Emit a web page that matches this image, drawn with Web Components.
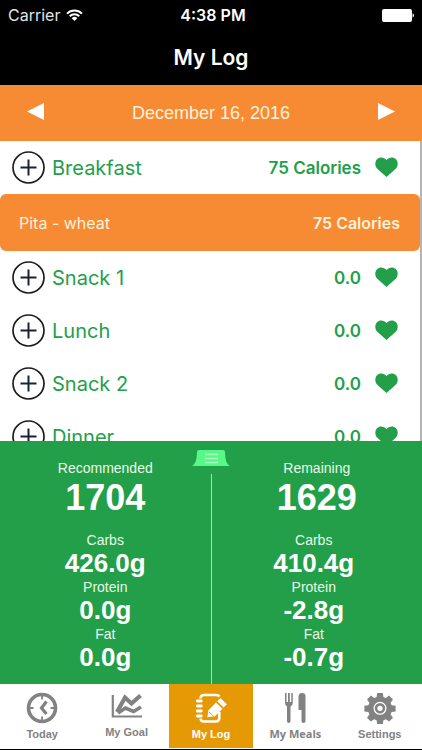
<!DOCTYPE html>
<html lang="en">
<head>
<meta charset="utf-8">
<meta name="viewport" content="width=device-width, initial-scale=1">
<title>My Log</title>
<style>
    body {
        margin: 0;
        font-family: Inter, "Liberation Sans", sans-serif;
        --orange: #f68b33;
        --green: #229f48;
        --active: #e59a05;
        --grey: #828282;
        --helvetica: "Liberation Sans", Arial, sans-serif;
    }
</style>
</head>
<body>

<log-app>
    <status-bar slot="top" carrier="Carrier" time="4:38 PM"></status-bar>
    <title-bar slot="top">My Log</title-bar>
    <date-bar slot="top">December 16, 2016</date-bar>

    <meal-row name="Breakfast">75 Calories</meal-row>
    <food-item name="Pita - wheat">75 Calories</food-item>
    <meal-row name="Snack 1">0.0</meal-row>
    <meal-row name="Lunch">0.0</meal-row>
    <meal-row name="Snack 2">0.0</meal-row>
    <meal-row name="Dinner">0.0</meal-row>

    <day-summary slot="bottom">
        <summary-column name="Recommended" total="1704" carbs="426.0g" protein="0.0g" fat="0.0g"></summary-column>
        <summary-column name="Remaining" total="1629" carbs="410.4g" protein="-2.8g" fat="-0.7g" class="last"></summary-column>
    </day-summary>
    <tab-bar slot="bottom">
        <tab-item icon="clock">Today</tab-item>
        <tab-item icon="chart">My Goal</tab-item>
        <tab-item icon="notebook" active>My Log</tab-item>
        <tab-item icon="cutlery">My Meals</tab-item>
        <tab-item icon="gear">Settings</tab-item>
    </tab-bar>
</log-app>

<script>
    (function() {
        // define a custom element from a function that returns its markup
        const define = (tag, render) => {
            customElements.define(tag, class extends HTMLElement {
                constructor() {
                    super();
                    this.attachShadow({ mode: "open" });
                }

                connectedCallback() {
                    this.shadowRoot.innerHTML = render(this);
                }
            });
        };

        define("log-app", () => `
    <style>
        :host {
            display: flex;
            flex-direction: column;
            height: 100vh;
            background-color: white;
        }

        main {
            flex: 1;
            min-height: 0;
            overflow: hidden;
            border-right: 2px solid #b4b4b4;
        }
    </style>
    <slot name="top"></slot>
    <main><slot></slot></main>
    <slot name="bottom"></slot>
        `);

        define("status-bar", (el) => `
    <style>
        :host {
            display: grid;
            grid-template-columns: 1fr auto 1fr;
            align-items: center;
            height: 30px;
            padding: 0 8px;
            background-color: black;
            color: white;
            font-size: 16px;
        }

        .carrier {
            display: flex;
            align-items: center;
            gap: 6px;
            color: #e4e4e4;
        }

        .time {
            padding-left: 4px;
            font-weight: 600;
        }

        .battery {
            justify-self: end;
        }

        svg {
            display: block;
        }
    </style>
    <span class="carrier">${el.getAttribute("carrier")}
        <svg width="17" height="12" viewBox="0 0 17 12" fill="none" stroke="white" stroke-width="2">
            <path d="M1 4.6a10.6 10.6 0 0 1 15 0M3.7 7.3a6.8 6.8 0 0 1 9.6 0"/>
            <path d="M8.5 12L5.7 9.2a4 4 0 0 1 5.6 0z" fill="white" stroke="none"/>
        </svg>
    </span>
    <span class="time">${el.getAttribute("time")}</span>
    <svg class="battery" width="32" height="13" viewBox="0 0 32 13" fill="white">
        <rect width="30" height="13" rx="2"/>
        <path d="M30.6 4.3q1.4 .6 1.4 2.2t-1.4 2.2z"/>
    </svg>
        `);

        define("title-bar", () => `
    <style>
        :host {
            display: block;
            background-color: black;
            color: white;
        }

        h1 {
            margin: 0;
            font-size: 21px;
            font-weight: 600;
            line-height: 55px;
            text-align: center;
        }
    </style>
    <h1><slot></slot></h1>
        `);

        define("date-bar", () => `
    <style>
        :host {
            display: flex;
            align-items: center;
            justify-content: space-between;
            height: 56px;
            padding: 0 27px;
            background-color: var(--orange);
            color: #fff1dc;
            font-family: var(--helvetica);
            font-size: 18px;
        }

        button {
            padding: 0 0 4px;
            border: 0;
            background: none;
        }

        svg {
            display: block;
        }
    </style>
    <button type="button" aria-label="Previous day">
        <svg width="17" height="17" fill="white"><path d="M17 0v17L0 8.5z"/></svg>
    </button>
    <span><slot></slot></span>
    <button type="button" aria-label="Next day">
        <svg width="17" height="17" fill="white"><path d="M0 0v17l17-8.5z"/></svg>
    </button>
        `);

        define("meal-row", (el) => `
    <style>
        :host {
            display: flex;
            align-items: center;
            height: 53px;
            padding: 0 22px 0 12px;
            color: var(--green);
        }

        h2 {
            flex: 1;
            margin: 0 0 0 7px;
            font-size: 20px;
            font-weight: 400;
        }

        .amount {
            margin-right: 14px;
            font-size: 17px;
            font-weight: 600;
        }

        button {
            padding: 0;
            border: 0;
            background: none;
            color: inherit;
        }

        .favorite {
            padding-bottom: 2px;
        }

        svg {
            display: block;
        }
    </style>
    <button type="button" aria-label="Add to ${el.getAttribute("name")}">
        <svg width="33" height="33" fill="none">
            <circle cx="16.5" cy="16.5" r="15.5" stroke="#1c1c20" stroke-width="1.7"/>
            <path d="M8.5 16.5h16M16.5 8.5v16" stroke="#1b2238" stroke-width="2"/>
        </svg>
    </button>
    <h2>${el.getAttribute("name")}</h2>
    <span class="amount"><slot></slot></span>
    <button type="button" class="favorite" aria-label="Favorite">
        <svg width="23" height="20" viewBox="0 0 23 20" fill="currentColor">
            <path d="M11.500 20L2.300 11.800C-.4 9.200-.2 4.500 2 2.200C4.500-.3 9-.1 11.500 3C14-.1 18.500-.3 21 2.200C23.200 4.500 23.400 9.200 20.700 11.800z"/>
        </svg>
    </button>
        `);

        define("food-item", (el) => `
    <style>
        :host {
            display: flex;
            align-items: center;
            justify-content: space-between;
            height: 57px;
            padding: 0 20px 0 19px;
            border-radius: 6px;
            background-color: var(--orange);
            color: #fff1dc;
            font-size: 16px;
        }

        .amount {
            font-weight: 600;
        }
    </style>
    <span>${el.getAttribute("name")}</span>
    <span class="amount"><slot></slot></span>
        `);

        define("day-summary", () => `
    <style>
        :host {
            display: grid;
            grid-template-columns: 1fr 1px 1fr;
            position: relative;
            background-color: var(--green);
            color: white;
            font-family: var(--helvetica);
            text-align: center;
        }

        ::slotted(summary-column) {
            grid-row: 1;
        }

        ::slotted(.last) {
            grid-column: 3;
        }

        .line {
            grid-column: 2;
            grid-row: 1;
            margin-top: 33px;
            background-color: #a5dfb5;
        }

        /* pull handle over the panel's top edge */
        button {
            position: absolute;
            top: 9px;
            left: 50%;
            transform: translateX(-50%);
            padding: 0;
            border: 0;
            background: none;
        }

        svg {
            display: block;
        }
    </style>
    <slot></slot>
    <div class="line"></div>
    <button type="button" aria-label="Toggle summary">
        <svg width="38" height="16" viewBox="0 0 38 16">
            <path d="M5 2q0-2 2-2h24q2 0 2 2c.3 8 1.500 12 5 14H0c3.500-2 4.700-6 5-14z" fill="#57f888"/>
            <path d="M13 4.500h13M13 8.500h13M13 12.500h13" stroke="#a9fcc1" stroke-width="1.400"/>
        </svg>
    </button>
        `);

        define("summary-column", (el) => `
    <style>
        :host {
            display: block;
            padding: 17px 0 13px;
            font-size: 14px;
            line-height: 20px;
        }

        .total {
            margin-bottom: 12px;
            font-size: 36px;
            font-weight: bold;
            line-height: 40px;
        }

        dl {
            margin: 0;
        }

        :host(.last) dl {
            margin-right: 6px;
        }

        dt, .name {
            color: #e8fbe9;
        }

        dd {
            margin: 0;
            font-size: 26px;
            font-weight: bold;
            line-height: 27px;
        }
    </style>
    <div class="name">${el.getAttribute("name")}</div>
    <div class="total">${el.getAttribute("total")}</div>
    <dl>
        <dt>Carbs</dt><dd>${el.getAttribute("carbs")}</dd>
        <dt>Protein</dt><dd>${el.getAttribute("protein")}</dd>
        <dt>Fat</dt><dd>${el.getAttribute("fat")}</dd>
    </dl>
        `);

        define("tab-bar", () => `
    <style>
        :host {
            display: block;
            padding-bottom: 1px;
            border-bottom: 1px solid black;
            background-color: white;
        }

        nav {
            display: grid;
            grid-template-columns: repeat(5, 1fr);
        }
    </style>
    <nav><slot></slot></nav>
        `);

        // 32x32 tab icons
        const icons = {
            clock: `
                <circle cx="16" cy="16" r="13.500" fill="none" stroke="currentColor" stroke-width="3.600"/>
                <path d="M16 4v3.500M16 24.500v3.500M4 16h3.500M24.500 16h3.500" fill="none" stroke="currentColor" stroke-width="1.800"/>
                <path d="M20.500 9.500L15.500 16l5 6" fill="none" stroke="currentColor" stroke-width="3.200"/>`,
            chart: `
                <path d="M1.800 3v21.500H31" fill="none" stroke="currentColor" stroke-width="2.200"/>
                <path d="M6 20L14 5.500l6.500 6L29.500 3.500" fill="none" stroke="currentColor" stroke-width="4.200"/>
                <path d="M7 21l7.500-5 8 3.500 7.500-4.500" fill="none" stroke="currentColor" stroke-width="3.600"/>`,
            notebook: `
                <path d="M5.500 8V6.500q0-3.500 3.500-3.500h12q2.500 0 3.500 1.500M24.300 20v6q0 3.500-3.500 3.500H9q-3.500 0-3.500-3.500V9" fill="none" stroke="currentColor" stroke-width="2.500"/>
                <path d="M3 9h4M3 14h4M3 19h4M3 24h4" fill="none" stroke="var(--active)" stroke-width="5"/>
                <path d="M2.300 9h4M2.300 14h4M2.300 19h4M2.300 24h4" fill="none" stroke="currentColor" stroke-width="2.800" stroke-linecap="round"/>
                <path d="M12.300 25.300l1.200-7L21 10.500l6.500 6.200-7.500 7.500z"/>
                <path d="M22.200 9.300L25.400 6l6.400 6.200-3.200 3.400z"/>
                <path d="M14 20l4.500 4" fill="none" stroke="var(--active)"/>`,
            cutlery: `
                <path d="M6 1h1.500v9H9V1h1.800v9h1.500V1h1.500v10q0 2.500-2.300 3.500V29q0 2-1.800 2T8 29V14.500Q6 13.500 6 11z"/>
                <path d="M19.500 5q0-4 3.500-4t3.500 3v25q0 2-2 2t-2-2V18h-3z"/>`,
            gear: `
                <path fill-rule="evenodd" d="M13.200 1h5.600l.6 4 2.500 1 3.200-2.400 3.900 3.900-2.400 3.200 1 2.500 4 .6v5.600l-4 .6-1 2.500 2.400 3.200-3.900 3.900-3.200-2.400-2.500 1-.6 4h-5.600l-.6-4-2.500-1-3.200 2.400L3 25.700l2.400-3.200-1-2.500-4-.6v-5.600l4-.6 1-2.500L3 7.500l3.900-3.900L10.100 6l2.500-1zM16 9.800a6.500 6.500 0 1 0 0 13 6.500 6.500 0 0 0 0-13z"/>
                <circle cx="16" cy="16.300" r="3.900" fill="none" stroke="currentColor" stroke-width="2.600"/>`
        };

        define("tab-item", (el) => `
    <style>
        a {
            display: flex;
            flex-direction: column;
            align-items: center;
            gap: 2px;
            height: 56px;
            padding-top: 8px;
            color: var(--grey);
            font-family: var(--helvetica);
            font-size: 11px;
            font-weight: bold;
            line-height: 16px;
            text-decoration: none;
        }

        :host([active]) a {
            background-color: var(--active);
            color: white;
        }

        /* these two labels are set apart from the rest */
        :host([icon="cutlery"]) a {
            font-family: "Open Sans", sans-serif;
        }

        :host([icon="chart"]) a {
            gap: 0;
        }
    </style>
    <a href="#" ${el.hasAttribute("active") ? 'aria-current="page"' : ""}>
        <svg width="32" height="32" viewBox="0 0 32 32" fill="currentColor">${icons[el.getAttribute("icon")]}</svg>
        <slot></slot>
    </a>
        `);
    })()
</script>
</body>
</html>
